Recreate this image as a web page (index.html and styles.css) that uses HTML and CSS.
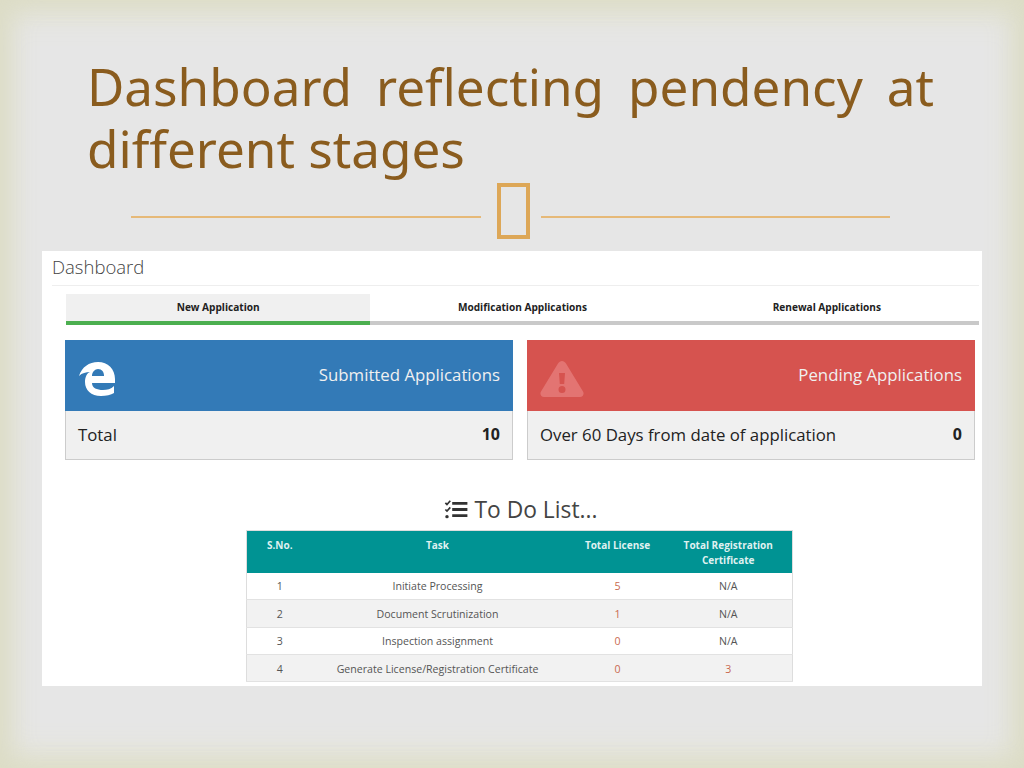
FILE: index.html
```html
<!DOCTYPE html>
<html lang="en">
<head>
    <meta charset="UTF-8">
    <meta name="viewport" content="width=device-width, initial-scale=1.0">
    <title>Dashboard reflecting pendency at different stages</title>
    <link rel="stylesheet" href="styles.css">
</head>
<body>

<div class="slide">
    <h1 class="slide-title">Dashboard reflecting pendency at different stages</h1>

    <div class="divider">
        <span class="divider-line"></span>
        <span class="divider-box"></span>
        <span class="divider-line"></span>
    </div>

    <div class="panel">
        <div class="panel-title">Dashboard</div>

        <div class="tabs">
            <div class="tab active">New Application</div>
            <div class="tab">Modification Applications</div>
            <div class="tab">Renewal Applications</div>
        </div>

        <div class="cards">
            <div class="card">
                <div class="card-head blue">
                    <svg class="edge-icon" viewBox="0 0 36 36" aria-hidden="true">
                        <path fill="#fff" fill-rule="evenodd" d="M0 15C3 6 10 1 19 1c10 0 17 7 17 17v4H13c0 5 5 7 11 7 4 0 8-1 11-4v7c-3 2-8 3-13 3-10 0-16-6-16-14 0-5 2-9 5-10-4 0-8 1-11 4zM13 15h12c0-4-2-7-6-7-3 0-6 3-6 7z"/>
                    </svg>
                    <span>Submitted Applications</span>
                </div>
                <div class="card-foot">
                    <span>Total</span>
                    <b>10</b>
                </div>
            </div>
            <div class="card">
                <div class="card-head red">
                    <svg class="warn-icon" viewBox="0 0 44 36" aria-hidden="true">
                        <path fill="#e37472" fill-rule="evenodd" d="M22 0c1.500 0 3 1 4 2.500l17 28c1.500 2.500 0 5.500-3 5.500H4c-3 0-4.500-3-3-5.500l17-28C19 1 20.500 0 22 0zM19 12l.8 11h4.400l.8-11zM22 25a3.500 3.500 0 1 0 0 7 3.500 3.500 0 0 0 0-7z"/>
                    </svg>
                    <span>Pending Applications</span>
                </div>
                <div class="card-foot">
                    <span>Over 60 Days from date of application</span>
                    <b>0</b>
                </div>
            </div>
        </div>

        <h2 class="todo-title">
            <svg class="todo-icon" viewBox="0 0 24 20" aria-hidden="true">
                <path fill="none" stroke="#333" stroke-width="1.800" d="M.8 3l1.700 1.700L6 .8M.8 10l1.700 1.700L6 7.800"/>
                <circle cx="2.500" cy="17.500" r="1.800" fill="#333"/>
                <path fill="#333" d="M8 2h16v3H8zM8 8.500h16v3H8zM8 15h16v3H8z"/>
            </svg>
            To Do List...
        </h2>

        <table class="todo">
            <thead>
                <tr>
                    <th class="col-no">S.No.</th>
                    <th class="col-task">Task</th>
                    <th class="col-lic">Total License</th>
                    <th class="col-reg">Total Registration Certificate</th>
                </tr>
            </thead>
            <tbody>
                <tr><td>1</td><td>Initiate Processing</td><td class="count">5</td><td class="reg">N/A</td></tr>
                <tr><td>2</td><td>Document Scrutinization</td><td class="count">1</td><td class="reg">N/A</td></tr>
                <tr><td>3</td><td>Inspection assignment</td><td class="count">0</td><td class="reg">N/A</td></tr>
                <tr><td>4</td><td>Generate License/Registration Certificate</td><td class="count">0</td><td class="count reg">3</td></tr>
            </tbody>
        </table>
    </div>
</div>

</body>
</html>
```

FILE: styles.css
```css
* {
    box-sizing: border-box;
}
html, body {
    margin: 0;
    height: 100%;
}
body {
    overflow: hidden;
    background-color: #e6e6e6;
}
.slide {
    width: 1024px;
    height: 768px;
    padding: 55px 42px 0;
    background-color: #e6e6e6;
    box-shadow: inset 14px 0 30px -4px #dcdcc6, inset -14px 0 30px -4px #dcdcc6, inset 0 20px 34px -8px #e0e0cc, inset 0 -20px 34px -8px #e2e2cf;
}

/* Titel */
.slide-title {
    margin: 0 48px 0 45px;
    font-family: "Noto Sans", sans-serif;
    font-size: 51.200px;
    font-weight: 400;
    line-height: 62px;
    color: #8a5c1e;
    text-align: justify;
}
.divider {
    display: flex;
    align-items: center;
    height: 56px;
    margin: 4px 92px 12px 89px;
}
.divider-line {
    flex: 1;
    height: 2px;
    margin-top: 12px;
    background-color: #e6b978;
}
.divider-box {
    width: 33px;
    height: 56px;
    margin: 0 11px 0 16px;
    border: 4px solid #dda757;
}

/* Screenshot panel */
.panel {
    height: 435px;
    padding: 0 3px 0 24px;
    background-color: #fff;
    font-family: "Open Sans", sans-serif;
    color: #222;
}
.panel-title {
    height: 35px;
    margin: 0 0 8px -14px;
    padding: 4px 0 0 0;
    border-bottom: 1px solid #eee;
    font-size: 18.500px;
    font-weight: 300;
    line-height: 24px;
    color: #444;
}
.tabs {
    display: flex;
}
.tab {
    flex: 1;
    height: 31px;
    padding-top: 5px;
    border-bottom: 4px solid #c9c9c9;
    font-size: 10.100px;
    font-weight: 700;
    line-height: 16px;
    text-align: center;
}
.tab.active {
    background-color: #f0f0f0;
    border-bottom-color: #4caf50;
}
.cards {
    display: flex;
    gap: 14px;
    margin: 15px 4px 0 -1px;
}
.card {
    flex: 1;
    height: 120px;
}
.card-head {
    display: flex;
    align-items: center;
    justify-content: space-between;
    height: 71px;
    padding: 0 13px 2px 14px;
    font-size: 16.800px;
    color: #f0f0f0;
}
.card-head.blue {
    background-color: #337ab7;
}
.card-head.red {
    background-color: #d6534f;
}
.edge-icon {
    width: 36px;
    height: 36px;
    margin-top: 8px;
}
.warn-icon {
    width: 44px;
    height: 36px;
    margin-left: -1px;
    margin-top: 9px;
}
.card-foot {
    display: flex;
    align-items: center;
    justify-content: space-between;
    height: 49px;
    padding: 0 12px 2px;
    background-color: #f0f0f0;
    border: 1px solid #ccc;
    border-top: none;
    font-size: 16.800px;
    color: #222;
}
.card-foot b {
    font-weight: 700;
    font-size: 16px;
}

/* To do list */
.todo-title {
    display: flex;
    align-items: center;
    justify-content: center;
    gap: 7px;
    height: 30px;
    margin: 34px 0 6px;
    padding-right: 4px;
    font-size: 22.800px;
    font-weight: 400;
    color: #444;
}
.todo-icon {
    width: 24px;
    height: 19px;
}
.todo {
    width: 546px;
    margin-left: 180px;
    border-collapse: collapse;
    table-layout: fixed;
    border: 1px solid #ddd;
    font-size: 10.600px;
    text-align: center;
    color: #555;
}
.todo th {
    height: 42px;
    padding: 7px 4px 0;
    background-color: #009393;
    font-size: 10px;
    font-weight: 700;
    line-height: 15px;
    color: #dff0f0;
    vertical-align: top;
}
.todo td {
    height: 27.300px;
    padding: 1px 0 0;
    border-bottom: 1px solid #e2e2e2;
}
.todo tbody tr:nth-child(even) {
    background-color: #f2f2f2;
}
.todo .col-no {
    width: 66px;
}
.todo .col-task {
    width: 250px;
}
.todo .col-lic {
    width: 110px;
}
.todo .col-reg {
    width: 120px;
    padding-right: 12px;
}
.todo .reg {
    padding-right: 8px;
}
.todo .count {
    color: #c9694e;
}
```
